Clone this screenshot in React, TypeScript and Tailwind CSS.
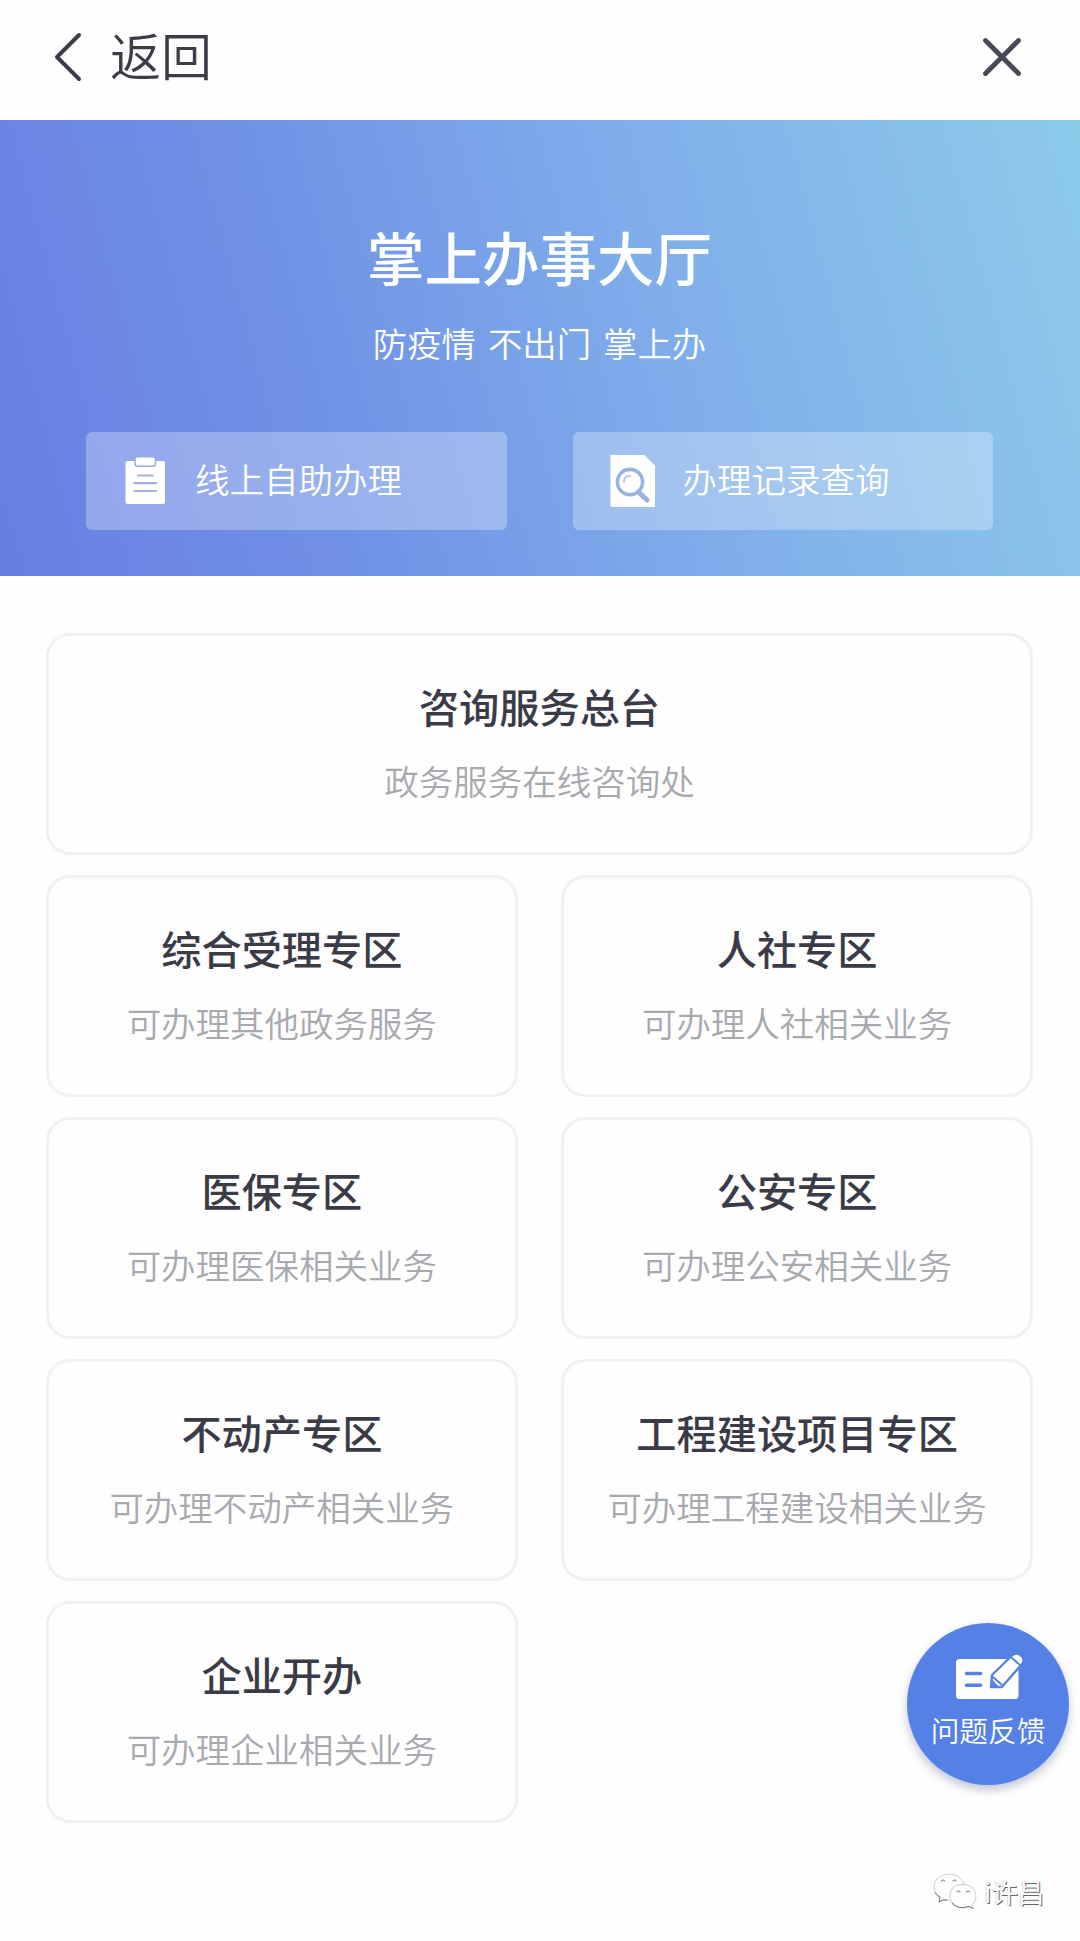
import React from "react";

const zones = [
  { title: "综合受理专区", desc: "可办理其他政务服务" },
  { title: "人社专区", desc: "可办理人社相关业务" },
  { title: "医保专区", desc: "可办理医保相关业务" },
  { title: "公安专区", desc: "可办理公安相关业务" },
  { title: "不动产专区", desc: "可办理不动产相关业务" },
  { title: "工程建设项目专区", desc: "可办理工程建设相关业务" },
  { title: "企业开办", desc: "可办理企业相关业务" },
];

function Card({ title, desc, wide }: { title: string; desc: string; wide?: boolean }) {
  return (
    <button
      className={`flex h-[221.500px] flex-col items-center rounded-[24px] border-[3px] border-[#f1f1f3] bg-[#fefefe] pt-[40px] ${wide ? "col-span-2" : ""}`}
    >
      <span className="text-[40.2px] leading-[60px] font-medium text-[#3b3b47]">{title}</span>
      <span className="mt-[19px] text-[34.5px] leading-[50px] font-[350] text-[#a8a9ae]">{desc}</span>
    </button>
  );
}

function ClipboardIcon() {
  return (
    <svg width="42" height="50" viewBox="0 0 42 50" className="shrink-0">
      <rect x="0.5" y="5" width="39.5" height="43" rx="2" fill="#fff" />
      <rect x="10" y="0.8" width="20.500" height="9.500" rx="2.5" fill="#fff" stroke="#97a9e8" strokeWidth="1.4" />
      <path d="M13 19.5h14.500M9.5 27.2h21.500M9.500 35h21.500" stroke="#a3b1e2" strokeWidth="2.200" strokeLinecap="round" />
    </svg>
  );
}

function RecordIcon() {
  return (
    <svg width="46" height="54" viewBox="0 0 46 54" className="shrink-0">
      <path d="M.5 1h34L45 11.500V53H.5z" fill="#fff" />
      <circle cx="20" cy="28" r="12.600" fill="none" stroke="#9ab3e3" strokeWidth="3.600" />
      <path d="M14 28c0-4 2.500-6 6-6" fill="none" stroke="#b4c7ea" strokeWidth="1.800" strokeLinecap="round" />
      <path d="m28.500 38 8.500 8" stroke="#9ab3e3" strokeWidth="5" strokeLinecap="round" />
    </svg>
  );
}

function FeedbackIcon() {
  return (
    <svg width="72" height="50" viewBox="0 0 72 50">
      <rect x="2" y="8" width="62.500" height="40" rx="3.500" fill="#fff" />
      <path d="M12.500 22.500h14M12.500 34.300h14" stroke="#5580e6" strokeWidth="3.600" strokeLinecap="round" />
      <path d="M37 36 38 24 57 5.500Q61 1 66 3.500Q71 7 69 12L50 33.500 48 36z" fill="#fff" stroke="#5580e6" strokeWidth="2.400" strokeLinejoin="round" />
      <path d="m57.500 6.500 9.500 8.500M39 26l9 8" stroke="#5580e6" strokeWidth="2" />
      <path d="m37 36 1-8 7 8z" fill="#5580e6" />
    </svg>
  );
}

function WechatMark() {
  return (
    <svg width="44" height="38" viewBox="0 0 44 38" fill="none" strokeLinecap="round">
      <g stroke="#cccccc" strokeWidth="1">
        <path d="M17 27C12 27.500 9 26 6 29L7 24C-1 19 0 8 6 4.500C14-1 27 0 31 11" fill="#fff" />
        <path d="M30 11.500c-9-1-14 6-13 13 2 10 12 12 19 9l4 2-1-4c5-4 5-11 1-16-3-3-6-4-11-4z" fill="#fff" />
      </g>
      <path d="M8.500 8q1.500-2 3 0M20 8q1.500-2 3 0M24 19q1.500-2 3 0M33.500 19q1.500-2 3 0" stroke="#888" strokeWidth="1.200" />
      <path d="M2 20q2 3 5 4l-1 5q4-3 8-2M19 30q6 7 17 3.500l4 2" stroke="#777" strokeWidth="1" />
    </svg>
  );
}

export default function App() {
  return (
    <main className="relative h-[1941px] w-[1080px] overflow-hidden bg-[#fefefe] font-['Noto_Sans_CJK_SC',sans-serif]">
      <header className="flex h-[120px] items-center justify-between pr-[58px] pl-[54px]">
        <button className="flex items-center">
          <svg width="28" height="50" viewBox="0 0 28 50" fill="none" className="mt-[-7px]">
            <path d="M25 3 3 25l22 22" stroke="#3b3c46" strokeWidth="4" strokeLinecap="round" strokeLinejoin="round" />
          </svg>
          <span className="mt-[-12px] ml-[28px] text-[51px] leading-[70px] text-[#3b3c46] font-[350]">返回</span>
        </button>
        <svg width="40" height="40" viewBox="0 0 40 40" className="mt-[-7px]">
          <path d="m3.500 3.500 33 33m0-33-33 33" stroke="#474956" strokeWidth="4.800" strokeLinecap="round" />
        </svg>
      </header>

      <section className="flex h-[455.500px] flex-col items-center bg-[linear-gradient(75deg,#687ee2_0%,#7092e6_30%,#80aeea_62%,#8ccbea_100%)] text-white">
        <h1 className="mt-[93.500px] pr-[1px] text-[57.5px] leading-[84px] font-medium">掌上办事大厅</h1>
        <p className="mt-[19px] pr-[1px] text-[34.400px] leading-[50px] font-[350] [word-spacing:4.300px]">防疫情 不出门 掌上办</p>
        <div className="mt-[65px] mr-[1px] flex w-[907px] justify-between">
          <button className="flex h-[98px] w-[420.500px] items-center rounded-[6px] bg-white/28 pl-[39px]">
            <ClipboardIcon />
            <span className="mt-[-5px] ml-[28px] text-[34.500px] leading-[50px] font-[350]">线上自助办理</span>
          </button>
          <button className="flex h-[98px] w-[420.500px] items-center rounded-[6px] bg-white/28 pl-[37px]">
            <RecordIcon />
            <span className="mt-[-5px] ml-[27px] text-[34.500px] leading-[50px] font-[350]">办理记录查询</span>
          </button>
        </div>
      </section>

      <section className="mr-[47px] ml-[46px] mt-[57.500px] grid grid-cols-2 gap-x-[43.500px] gap-y-[20.600px]">
        <Card title="咨询服务总台" desc="政务服务在线咨询处" wide />
        {zones.map((z) => (
          <Card key={z.title} title={z.title} desc={z.desc} />
        ))}
      </section>

      <button className="absolute top-[1623px] left-[907px] flex h-[162px] w-[162px] flex-col items-center rounded-full bg-[#5580e6] pt-[28px] shadow-[0_5px_10px_rgba(60,70,120,0.3)]">
        <div className="pl-[4px]">
          <FeedbackIcon />
        </div>
        <span className="mt-[8.500px] text-[28.700px] leading-[40px] font-[350] text-white">问题反馈</span>
      </button>

      <div className="absolute top-[1872px] left-[933px] flex items-center">
        <WechatMark />
        <span className="ml-[7px] text-[26.500px] leading-[40px] text-white [text-shadow:1px_1px_0_#666,-0.500px_-0.500px_0_#bbb]">i许昌</span>
      </div>
    </main>
  );
}
